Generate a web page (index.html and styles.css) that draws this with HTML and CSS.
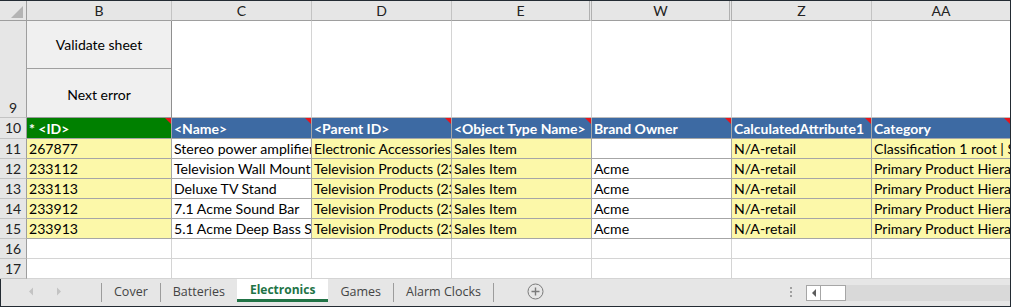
FILE: index.html
```html
<!DOCTYPE html>
<html lang="en">
<head>
  <meta charset="UTF-8">
  <title>Electronics</title>
  <link rel="stylesheet" href="styles.css">
</head>
<body>
  <div class="sheet">
    <div class="grid">
      <!-- column headings -->
      <div class="corner"><span class="corner-mark"></span></div>
      <div class="ch">B</div>
      <div class="ch">C</div>
      <div class="ch">D</div>
      <div class="ch hidden-after">E</div>
      <div class="ch hidden-after">W</div>
      <div class="ch">Z</div>
      <div class="ch last">AA</div>

      <!-- row 9: macro buttons -->
      <div class="rh tall">9</div>
      <div class="cell macro">
        <button class="macro-btn">Validate sheet</button>
        <button class="macro-btn">Next error</button>
      </div>
      <div class="cell top"></div>
      <div class="cell top"></div>
      <div class="cell top"></div>
      <div class="cell top"></div>
      <div class="cell top"></div>
      <div class="cell top last"></div>

      <!-- row 10: attribute headers -->
      <div class="rh">10</div>
      <div class="cell hdr id">* &lt;ID&gt;</div>
      <div class="cell hdr">&lt;Name&gt;</div>
      <div class="cell hdr">&lt;Parent ID&gt;</div>
      <div class="cell hdr">&lt;Object Type Name&gt;</div>
      <div class="cell hdr">Brand Owner</div>
      <div class="cell hdr">CalculatedAttribute1</div>
      <div class="cell hdr last">Category</div>

      <div class="rh">11</div>
      <div class="cell data y">267877</div>
      <div class="cell data">Stereo power amplifier</div>
      <div class="cell data y">Electronic Accessories</div>
      <div class="cell data y">Sales Item</div>
      <div class="cell data"></div>
      <div class="cell data y">N/A-retail</div>
      <div class="cell data y last">Classification 1 root | Stereo</div>

      <div class="rh">12</div>
      <div class="cell data y">233112</div>
      <div class="cell data">Television Wall Mount Bracket</div>
      <div class="cell data y">Television Products (23310)</div>
      <div class="cell data y">Sales Item</div>
      <div class="cell data">Acme</div>
      <div class="cell data y">N/A-retail</div>
      <div class="cell data y last">Primary Product Hierarchy</div>

      <div class="rh">13</div>
      <div class="cell data y">233113</div>
      <div class="cell data">Deluxe TV Stand</div>
      <div class="cell data y">Television Products (23310)</div>
      <div class="cell data y">Sales Item</div>
      <div class="cell data">Acme</div>
      <div class="cell data y">N/A-retail</div>
      <div class="cell data y last">Primary Product Hierarchy</div>

      <div class="rh">14</div>
      <div class="cell data y">233912</div>
      <div class="cell data">7.1 Acme Sound Bar</div>
      <div class="cell data y">Television Products (23310)</div>
      <div class="cell data y">Sales Item</div>
      <div class="cell data">Acme</div>
      <div class="cell data y">N/A-retail</div>
      <div class="cell data y last">Primary Product Hierarchy</div>

      <div class="rh">15</div>
      <div class="cell data y">233913</div>
      <div class="cell data">5.1 Acme Deep Bass Subwoofer</div>
      <div class="cell data y">Television Products (23310)</div>
      <div class="cell data y">Sales Item</div>
      <div class="cell data">Acme</div>
      <div class="cell data y">N/A-retail</div>
      <div class="cell data y last">Primary Product Hierarchy</div>

      <div class="rh">16</div>
      <div class="cell"></div>
      <div class="cell"></div>
      <div class="cell"></div>
      <div class="cell"></div>
      <div class="cell"></div>
      <div class="cell"></div>
      <div class="cell last"></div>

      <div class="rh">17</div>
      <div class="cell"></div>
      <div class="cell"></div>
      <div class="cell"></div>
      <div class="cell"></div>
      <div class="cell"></div>
      <div class="cell"></div>
      <div class="cell last"></div>
    </div>

    <!-- sheet tabs -->
    <div class="tabbar">
      <div class="tabnav">
        <svg width="6" height="9" viewBox="0 0 6 9"><path d="M5 0.5 L1 4.5 L5 8.5 Z" fill="#c3c3c3"/></svg>
        <svg width="6" height="9" viewBox="0 0 6 9"><path d="M1 0.5 L5 4.5 L1 8.5 Z" fill="#c3c3c3"/></svg>
      </div>
      <span class="sep"></span>
      <div class="tab">Cover</div>
      <span class="sep"></span>
      <div class="tab">Batteries</div>
      <div class="tab active">Electronics</div>
      <div class="tab">Games</div>
      <span class="sep"></span>
      <div class="tab">Alarm Clocks</div>
      <span class="sep"></span>
      <span class="addsheet">
        <svg width="17" height="17" viewBox="0 0 17 17">
          <circle cx="8.5" cy="8.5" r="7.5" fill="none" stroke="#7a7a7a" stroke-width="1"/>
          <path d="M8.5 4.5 V12.5 M4.5 8.5 H12.5" stroke="#7a7a7a" stroke-width="1.4"/>
        </svg>
      </span>
      <span class="spacer"></span>
      <span class="grip"><i></i><i></i><i></i></span>
      <div class="hscroll">
        <span class="hs-btn">
          <svg width="6" height="8" viewBox="0 0 6 8"><path d="M5 0 L1 4 L5 8 Z" fill="#5c5c5c"/></svg>
        </span>
        <span class="hs-thumb"></span>
        <span class="hs-track"></span>
      </div>
    </div>
  </div>
</body>
</html>
```

FILE: styles.css
```css
body {
  margin: 0;
  background: #fff;
  font-family: Lato, "Liberation Sans", sans-serif;
  font-size: 14px;
  color: #000;
}
.sheet {
  width: 1011px; height: 307px; box-sizing: border-box;
  border-top: 1px solid #232b33; border-right: 1px solid #232b33; border-bottom: 1px solid #232b33;
  display: flex; flex-direction: column; overflow: hidden;
}

/* grid of cells */
.grid {
  display: grid;
  grid-template-columns: 27px 145px 140px 140px 140px 140px 140px 138px;
  grid-template-rows: 20px 97px 21px repeat(7, 20px);
}
.grid > div {
  box-sizing: border-box; overflow: hidden; white-space: nowrap;
  line-height: 19px;
}
.corner {
  background: #e6e6e6; border-right: 1px solid #9e9e9e; border-bottom: 1px solid #9e9e9e;
  position: relative;
}
.corner-mark {
  position: absolute; left: 11px; top: 5px;
  border-left: 12px solid transparent; border-bottom: 12px solid #b4b4b4;
}
.ch {
  background: #e6e6e6; color: #222; text-align: center;
  border-right: 1px solid #c3c3c3; border-bottom: 1px solid #9e9e9e;
}
.ch.hidden-after { border-right: 3px double #b0b0b0; }
.ch.last { border-right: none; }
.rh {
  background: #e6e6e6; color: #222; text-align: center;
  border-right: 1px solid #9e9e9e; border-bottom: 1px solid #c3c3c3;
}
.rh.tall { display: flex; align-items: flex-end; justify-content: center; }

.cell {
  padding: 0 2px;
  border-right: 1px solid #d4d4d4; border-bottom: 1px solid #d4d4d4;
}
.cell.last { border-right: none; }
.cell.top { border-bottom-color: #bdbdbd; }

/* macro buttons in row 9 */
.cell.macro {
  padding: 0; display: flex; flex-direction: column;
  border-right: 1px solid #8f8f8f; border-bottom: 1px solid #9a9a9a;
  background: #f0f0f0;
}
.macro-btn {
  flex: 1; margin: 0; padding: 0 0 1px;
  background: #f0f0f0; border: none; border-bottom: 1px solid #a0a0a0;
  font-family: inherit; font-size: 14px; color: #000;
}
.macro-btn:last-child { border-bottom: none; padding: 2px 0 0; }

/* attribute headers */
.cell.hdr {
  position: relative; background: #3d6aa3; color: #fff; font-weight: bold;
  border-right-color: #a6a6a6; border-bottom-color: #a6a6a6;
  line-height: 21px;
}
.cell.hdr.id { background: #008000; }
.cell.hdr::after {
  content: ""; position: absolute; top: 0; right: 0;
  border-top: 6px solid #e8141b; border-left: 6px solid transparent;
}
.cell.data {
  font-size: 14.1px; text-overflow: clip;
  border-right-color: #a6a6a6; border-bottom-color: #a6a6a6;
}
.cell.y { background: #fcf8a9; }

/* sheet tabs */
.tabbar {
  height: 27px; box-sizing: border-box; background: #e6e6e6;
  border-left: 1px solid #232b33;
  display: flex; align-items: flex-start;
  font-family: "Open Sans", "Liberation Sans", sans-serif; font-size: 12.5px; color: #444;
}
.tabnav {
  width: 100px; height: 24px; display: flex; align-items: center; gap: 22px;
  padding-left: 27px; box-sizing: border-box;
}
.sep { width: 1px; height: 19px; margin-top: 4px; background: #9c9c9c; }
.tab {
  height: 23px; line-height: 25px; padding: 0 12px; box-sizing: border-box;
}
.tab.active {
  background: #fff; color: #217346; font-weight: bold; font-size: 12px;
  border-bottom: 3px solid #217346; line-height: 22px; padding: 0 13px;
}
.addsheet { margin: 4px 0 0 33px; display: flex; }
.spacer { flex: 1; }
.grip {
  display: flex; flex-direction: column; gap: 2px; margin: 8px 14px 0 0;
}
.grip i { display: block; width: 2px; height: 2px; background: #a0a0a0; }
.hscroll { display: flex; width: 204px; height: 16px; margin-top: 6px; }
.hs-btn {
  width: 15px; box-sizing: border-box; background: #fff;
  border: 1px solid #a6a6a6; display: flex; align-items: center; justify-content: center;
}
.hs-thumb {
  width: 25px; box-sizing: border-box; background: #fff;
  border: 1px solid #a6a6a6; border-left: none;
}
.hs-track { flex: 1; background: #d9d9d9; }
```
